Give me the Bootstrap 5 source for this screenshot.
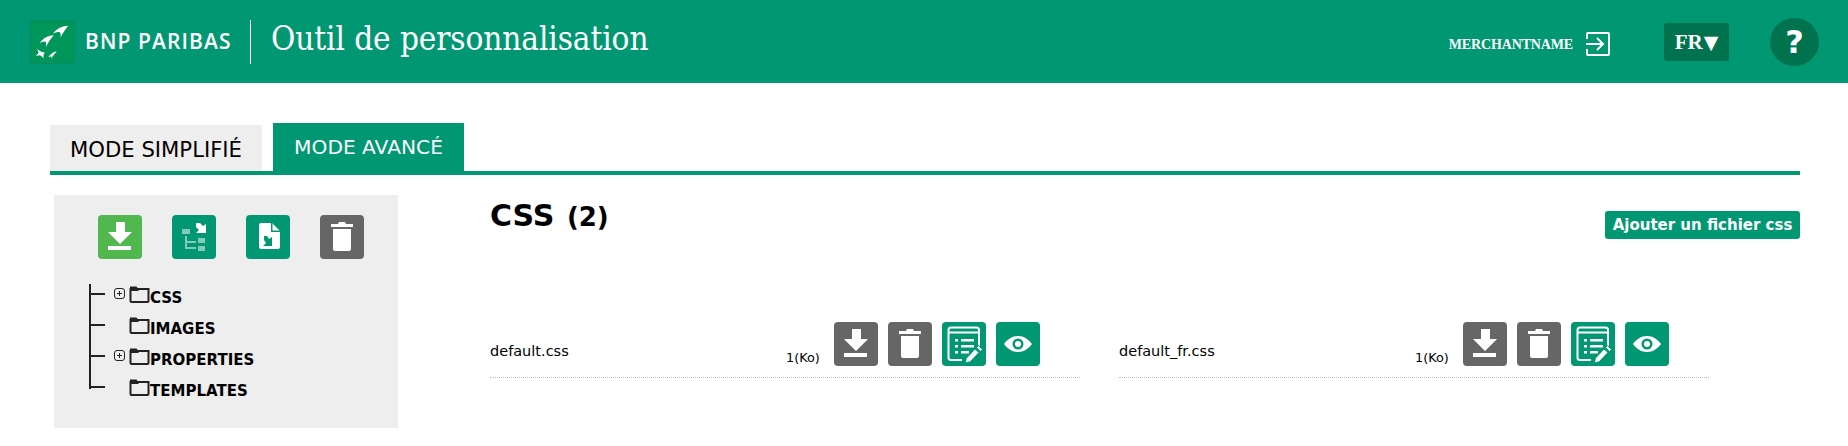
<!DOCTYPE html>
<html lang="fr">
<head>
    <meta charset="UTF-8">
    <meta name="viewport" content="width=device-width, initial-scale=1">
    <title>Outil de personnalisation</title>
    <link href="https://cdn.jsdelivr.net/npm/bootstrap@5.3.0/dist/css/bootstrap.min.css" rel="stylesheet">
    <style>
        body {
            background-color: #fff;
            color: #000;
            font-family: "DejaVu Sans", sans-serif;
        }
        /* header */
        .top-bar {
            height: 83px;
            background-color: #009772;
            color: #fff;
            padding: 0 29px 0 30px;
        }
        .logo-box {
            width: 45px;
            height: 44px;
            background-color: #00965a;
            border: 1px solid #068a5f;
        }
        .logo-text {
            font-family: "Open Sans", sans-serif;
            font-weight: 600;
            font-size: 21px;
            letter-spacing: 1.1px;
            width: 165px;
            margin-left: 10px;
            line-height: 1;
            white-space: nowrap;
        }
        .logo-sep {
            width: 1px;
            height: 44px;
            background-color: #fff;
        }
        .app-title {
            font-family: "DejaVu Serif Condensed", "DejaVu Serif", serif;
            font-size: 33px;
            letter-spacing: -0.1px;
            margin: 0 0 5px 20px;
            font-weight: 400;
        }
        .merchant {
            font-family: "Liberation Serif", serif;
            font-weight: 700;
            font-size: 14px;
            letter-spacing: -0.15px;
            padding-top: 5px;
        }
        .logout-icon {
            width: 24px;
            height: 24px;
            margin: 5px 54px 0 13px;
        }
        .lang-btn {
            width: 65px;
            height: 38px;
            background-color: #00734e;
            border-radius: 3px;
            font-family: "Liberation Serif", serif;
            font-weight: 700;
            font-size: 21px;
            line-height: 38px;
            color: #fff;
            margin-right: 41px;
        }
        .lang-arrow {
            font-family: "DejaVu Sans", sans-serif;
            font-size: 19px;
            margin-left: 1px;
        }
        .help-btn {
            width: 49px;
            height: 48px;
            border-radius: 50%;
            background-color: #00734e;
            color: #fff;
            font-weight: 700;
            font-size: 32px;
            line-height: 1;
        }
        /* tabs */
        .page-wrap {
            margin: 40px 48px 0 50px;
        }
        .mode-tabs {
            border-bottom: 4px solid #009772;
            gap: 11px;
        }
        .mode-tabs .nav-link {
            border: 0;
            border-radius: 0;
            margin: 0;
            height: 47px;
            font-size: 21.2px;
            line-height: 49px;
            padding: 0;
            text-align: center;
            color: #000;
            background-color: #eee;
        }
        .mode-tabs .tab-simple {
            width: 212px;
            margin-top: 1px;
            height: 46px;
        }
        .mode-tabs .nav-link.active {
            width: 191px;
            height: 48px;
            font-size: 20.2px;
            color: #fff;
            background-color: #009772;
        }
        /* sidebar */
        .side-panel {
            width: 344px;
            height: 233px;
            margin: 20px 0 0 4px;
            padding: 20px 0 0 44px;
            background-color: #eee;
        }
        .tool-btn {
            width: 44px;
            height: 44px;
            border-radius: 4px;
            border: 0;
            padding: 0;
            flex: none;
            display: block;
        }
        .tool-btn svg {
            display: block;
            width: 44px;
            height: 44px;
        }
        .btn-green { background-color: #50b84f; }
        .btn-teal { background-color: #009772; }
        .btn-gray { background-color: #666; }
        .side-tools {
            gap: 30px;
        }
        .file-tree {
            list-style: none;
            margin: 25px 0 0 -9px;
            padding: 0;
            border-left: 2px solid #222;
            height: 105px;
        }
        .tree-row {
            height: 31px;
            display: flex;
            align-items: flex-start;
            font-weight: 700;
            font-size: 15px;
        }
        .tree-tick {
            width: 14px;
            margin-top: 9px;
            border-top: 2px solid #222;
            flex: none;
        }
        .tree-plus {
            width: 11px;
            height: 11px;
            margin: 4px 4px 0 9px;
            flex: none;
            display: block;
        }
        .tree-noplus {
            width: 24px;
            flex: none;
        }
        .tree-folder {
            width: 21px;
            height: 18px;
            margin-top: 1px;
            flex: none;
            display: block;
        }
        .tree-label {
            line-height: 18px;
            margin: 5px 0 0 0;
        }
        /* content */
        .main-area {
            margin: 0 0 0 92px;
            padding-top: 24px;
        }
        .section-title {
            font-size: 30px;
            font-weight: 700;
            margin: 0;
            line-height: 34px;
        }
        .section-title span {
            font-size: 26px;
            margin-left: 2px;
        }
        .add-btn {
            width: 195px;
            height: 28px;
            background-color: #009772;
            color: #fff;
            font-weight: 700;
            font-size: 15px;
            border: 0;
            border-radius: 3px;
            padding: 0;
            margin-top: 12px;
        }
        .file-grid {
            width: 1220px;
            gap: 39px;
            margin-top: 83px;
        }
        .file-item {
            width: 590px;
            height: 56px;
            border-bottom: 1px dotted #bbb;
        }
        .file-name {
            font-size: 14.5px;
            width: 296px;
            margin-top: 19px;
        }
        .file-size {
            font-size: 12.8px;
            width: 48px;
            margin-top: 26px;
        }
        .file-actions {
            gap: 10px;
        }
    </style>
</head>
<body>

    <!-- icons -->
    <svg width="0" height="0" class="d-none">
        <symbol id="i-download" viewBox="0 0 44 44">
            <path fill="#fff" d="M18 7h9v10h7L22 29 10 17h8z"/>
            <rect fill="#fff" x="10" y="31" width="23" height="4"/>
        </symbol>
        <symbol id="i-trash" viewBox="0 0 44 44">
            <path fill="#fff" d="M11 9h7l1-2h6l1 2h7v3H11z"/>
            <path fill="#fff" d="M13 14h18v20a2 2 0 0 1-2 2H15a2 2 0 0 1-2-2z"/>
        </symbol>
        <symbol id="i-import-tree" viewBox="0 0 44 44">
            <g fill="#fff" fill-opacity=".5">
                <rect x="10" y="14" width="8" height="5"/>
                <rect x="26" y="23" width="7" height="5"/>
                <rect x="26" y="31" width="7" height="5"/>
                <path d="M13 21h2v5h9v2h-9v4h9v2H13z"/>
            </g>
            <path fill="#fff" d="M24 8h4l3 3 3-2v9H24l3-3-3-3z"/>
        </symbol>
        <symbol id="i-import-file" viewBox="0 0 44 44">
            <path fill="#fff" d="M15 8h11l8 8v16a2 2 0 0 1-2 2H15a2 2 0 0 1-2-2V10a2 2 0 0 1 2-2z"/>
            <path fill="#009772" d="M25 8h1.500v7.500H34V17h-9z"/>
            <path fill="#009772" d="M18 21h3l2 3 3-2v9h-9l3-3-2-3z"/>
        </symbol>
        <symbol id="i-edit" viewBox="0 0 44 44">
            <path fill="none" stroke="#fff" stroke-width="2" d="M20 38H9a2.500 2.500 0 0 1-2.500-2.500V8A2.500 2.500 0 0 1 9 5.500h25.500A2.500 2.500 0 0 1 37 8v17"/>
            <path fill="#fff" d="M7 9.500h30v2H7z"/>
            <path fill="#fff" d="M13 17h3v2.500h-3zM19 17h13v2.500H19zM13 23h3v2.500h-3zM19 23h13v2.500H19zM13 29h3v2.500h-3zM19 29h8v2.500h-8z"/>
            <path fill="#fff" stroke="#009772" stroke-width="1.500" d="M24 36l9-9.500 4.500 4-9 9.500-5.500 1.500z"/>
            <path fill="#fff" stroke="#009772" stroke-width="1" d="M34.500 25.500l2-2 4 3.800-2.200 2.200z"/>
        </symbol>
        <symbol id="i-eye" viewBox="0 0 44 44">
            <path fill="#fff" fill-rule="evenodd" d="M22 14c6 0 10.500 3.500 14 8-3.500 4.500-8 8-14 8s-10.500-3.500-14-8c3.500-4.500 8-8 14-8zm0 2.500a5.500 5.500 0 1 0 0 11 5.500 5.500 0 0 0 0-11z"/>
            <circle fill="#fff" cx="22" cy="22" r="3"/>
        </symbol>
        <symbol id="i-folder" viewBox="0 0 21 18">
            <path fill="none" stroke="#222" stroke-width="2" d="M1.500 4h18v12a1 1 0 0 1-1 1h-16a1 1 0 0 1-1-1z"/>
            <path fill="#222" d="M1 1.500h6.500L9.500 4v2H1z"/>
        </symbol>
        <symbol id="i-plus" viewBox="0 0 11 11">
            <rect x=".5" y=".5" width="10" height="10" rx="2.500" fill="none" stroke="#222"/>
            <path stroke="#222" d="M3 5.500h5M5.500 3v5"/>
        </symbol>
    </svg>

    <header class="top-bar d-flex align-items-center">
        <div class="logo-box flex-shrink-0">
            <svg viewBox="0 0 45 44" width="43" height="42" class="d-block">
                <path fill="#fff" d="M39 5c-6 0-12 3-16 8 3-1 5-1.500 7-1.500 1 1.500 1.500 3.500 1 6 2-4 4-8 8-12.500z"/>
                <path fill="#fff" d="M24 15c-6 0-11 3-15 8 2-1 4-1.500 6-1.500 1 1.500 1 3.500.5 6 2-4 4.500-8.500 8.500-12.500z"/>
                <path fill="#fff" d="M5 28c2 2 2.500 3.500 3 5.500l-3 3 4.500-.5 4 3c-1-2.500-.5-4 1-6-3 0-6.500-2-9.500-5z"/>
                <path fill="#fff" d="M27 32c-3 0-6 2-9 6l3.500-1-.5 3c1.500-3 3.500-5.500 6-8z"/>
            </svg>
        </div>
        <div class="logo-text">BNP PARIBAS</div>
        <div class="logo-sep flex-shrink-0"></div>
        <h1 class="app-title">Outil de personnalisation</h1>
        <div class="merchant ms-auto">MERCHANTNAME</div>
        <svg class="logout-icon" viewBox="0 0 24 24" fill="none" stroke="#fff" stroke-width="2">
            <path d="M1 7V2a1 1 0 0 1 1-1h20a1 1 0 0 1 1 1v20a1 1 0 0 1-1 1H2a1 1 0 0 1-1-1v-5"/>
            <path d="M0 12h17M11 6l6 6-6 6"/>
        </svg>
        <button type="button" class="lang-btn btn p-0 border-0">FR<span class="lang-arrow">&#9660;</span></button>
        <button type="button" class="help-btn btn p-0 border-0">?</button>
    </header>

    <div class="page-wrap">
        <ul class="nav mode-tabs align-items-end">
            <li class="nav-item"><a class="nav-link tab-simple" href="#">MODE SIMPLIFIÉ</a></li>
            <li class="nav-item"><a class="nav-link active" href="#">MODE AVANCÉ</a></li>
        </ul>

        <div class="d-flex">
            <aside class="side-panel flex-shrink-0">
                <div class="d-flex side-tools">
                    <button type="button" class="tool-btn btn-green"><svg><use href="#i-download"/></svg></button>
                    <button type="button" class="tool-btn btn-teal"><svg><use href="#i-import-tree"/></svg></button>
                    <button type="button" class="tool-btn btn-teal"><svg><use href="#i-import-file"/></svg></button>
                    <button type="button" class="tool-btn btn-gray"><svg><use href="#i-trash"/></svg></button>
                </div>
                <ul class="file-tree">
                    <li class="tree-row">
                        <span class="tree-tick"></span>
                        <svg class="tree-plus"><use href="#i-plus"/></svg>
                        <svg class="tree-folder"><use href="#i-folder"/></svg>
                        <span class="tree-label">CSS</span>
                    </li>
                    <li class="tree-row">
                        <span class="tree-tick"></span>
                        <span class="tree-noplus"></span>
                        <svg class="tree-folder"><use href="#i-folder"/></svg>
                        <span class="tree-label">IMAGES</span>
                    </li>
                    <li class="tree-row">
                        <span class="tree-tick"></span>
                        <svg class="tree-plus"><use href="#i-plus"/></svg>
                        <svg class="tree-folder"><use href="#i-folder"/></svg>
                        <span class="tree-label">PROPERTIES</span>
                    </li>
                    <li class="tree-row">
                        <span class="tree-tick"></span>
                        <span class="tree-noplus"></span>
                        <svg class="tree-folder"><use href="#i-folder"/></svg>
                        <span class="tree-label">TEMPLATES</span>
                    </li>
                </ul>
            </aside>

            <main class="main-area flex-grow-1">
                <div class="d-flex justify-content-between align-items-start">
                    <h2 class="section-title">CSS <span>(2)</span></h2>
                    <button type="button" class="add-btn">Ajouter un fichier css</button>
                </div>
                <div class="d-flex file-grid">
                    <div class="file-item d-flex">
                        <div class="file-name">default.css</div>
                        <div class="file-size">1(Ko)</div>
                        <div class="d-flex file-actions">
                            <button type="button" class="tool-btn btn-gray"><svg><use href="#i-download"/></svg></button>
                            <button type="button" class="tool-btn btn-gray"><svg><use href="#i-trash"/></svg></button>
                            <button type="button" class="tool-btn btn-teal"><svg><use href="#i-edit"/></svg></button>
                            <button type="button" class="tool-btn btn-teal"><svg><use href="#i-eye"/></svg></button>
                        </div>
                    </div>
                    <div class="file-item d-flex">
                        <div class="file-name">default_fr.css</div>
                        <div class="file-size">1(Ko)</div>
                        <div class="d-flex file-actions">
                            <button type="button" class="tool-btn btn-gray"><svg><use href="#i-download"/></svg></button>
                            <button type="button" class="tool-btn btn-gray"><svg><use href="#i-trash"/></svg></button>
                            <button type="button" class="tool-btn btn-teal"><svg><use href="#i-edit"/></svg></button>
                            <button type="button" class="tool-btn btn-teal"><svg><use href="#i-eye"/></svg></button>
                        </div>
                    </div>
                </div>
            </main>
        </div>
    </div>

    <script src="https://cdn.jsdelivr.net/npm/bootstrap@5.3.0/dist/js/bootstrap.bundle.min.js"></script>
</body>
</html>
